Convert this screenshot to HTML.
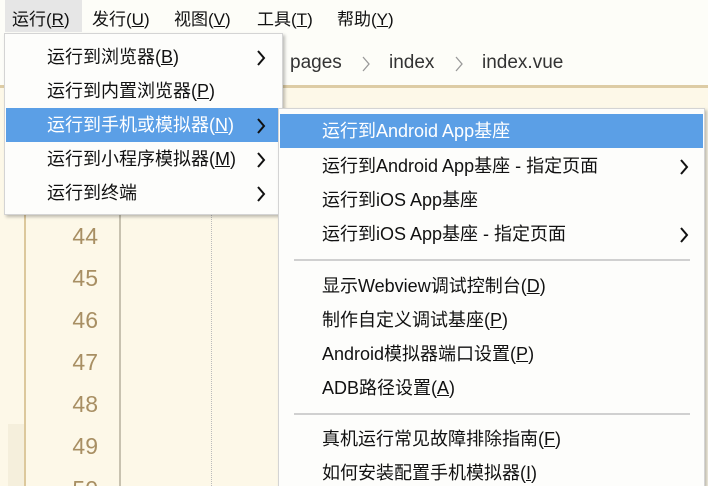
<!DOCTYPE html>
<html style="width:708px;height:486px;overflow:hidden"><head><meta charset="utf-8"><style>
*{margin:0;padding:0;box-sizing:border-box}
body{width:708px;height:486px;overflow:hidden;background:#fdf8e8;font-family:"Liberation Sans","Noto Sans CJK SC",sans-serif;position:relative;color:#111}
.a{position:absolute}
.mb{left:0;top:0;width:708px;height:33px;background:#fdfdf8}
.mb span{position:absolute;top:5px;font-size:17px}
.crumb{left:0;top:33px;width:708px;height:55px;background:#fdfdf8;border-bottom:3px solid #ddcca5}
.crumb span{position:absolute;top:19px;font-size:19px;color:#333}
.crumb svg{position:absolute;top:23px}
.ln{font-size:23px;color:#a88f63;left:64px;width:34px;text-align:right}
.menu{background:#fdfdfb;border:1px solid #d4d4d4;box-shadow:2px 2px 3px rgba(0,0,0,.25)}
.it{position:absolute;left:0;right:0;height:34px;font-size:18px;line-height:34px;white-space:nowrap}
.hl{background:#5b9fe6;color:#fff}
.arr{position:absolute;top:10px}
.sep{position:absolute;height:2px;background:#d0d0d0}
u{text-decoration:underline}
</style></head><body>
<div class="a mb">
<div class="a" style="left:5px;top:0;width:77px;height:32px;background:#e6e6e6"></div>
<span style="left:12px">运行(<u>R</u>)</span>
<span style="left:92px">发行(<u>U</u>)</span>
<span style="left:174px">视图(<u>V</u>)</span>
<span style="left:257px">工具(<u>T</u>)</span>
<span style="left:337px">帮助(<u>Y</u>)</span>
</div>
<div class="a crumb">
<span style="left:290px">pages</span>
<svg style="left:361px" width="10" height="16"><polyline points="2,1 8,8 2,15" fill="none" stroke="#999" stroke-width="1.3"/></svg>
<span style="left:389px">index</span>
<svg style="left:454px" width="10" height="16"><polyline points="2,1 8,8 2,15" fill="none" stroke="#999" stroke-width="1.3"/></svg>
<span style="left:482px">index.vue</span>
</div>
<div class="a" style="left:8px;top:424px;width:16px;height:62px;background:#f5efdc"></div>
<div class="a" style="left:24px;top:91px;width:2px;height:395px;background:#dcc89c"></div>
<div class="a" style="left:119px;top:91px;width:2px;height:395px;background:#c8c2b0"></div>
<div class="a" style="left:211px;top:91px;width:0;height:395px;border-left:1px dotted #bbb"></div>
<div class="a ln" style="top:223px">44</div>
<div class="a ln" style="top:265px">45</div>
<div class="a ln" style="top:307px">46</div>
<div class="a ln" style="top:349px">47</div>
<div class="a ln" style="top:391px">48</div>
<div class="a ln" style="top:433px">49</div>
<div class="a ln" style="top:476px">50</div>

<div class="a menu" style="left:4px;top:33px;width:279px;height:182px">
<div class="it" style="top:6px"><span style="padding-left:42px">运行到浏览器(<u>B</u>)</span><svg class="arr" style="left:251px" width="10" height="16"><polyline points="2,1 8,8 2,15" fill="none" stroke="#111" stroke-width="2"/></svg></div>
<div class="it" style="top:40px"><span style="padding-left:42px">运行到内置浏览器(<u>P</u>)</span></div>
<div class="it hl" style="top:74px;left:1px;right:1px"><span style="padding-left:41px">运行到手机或模拟器(<u>N</u>)</span><svg class="arr" style="left:250px" width="10" height="16"><polyline points="2,1 8,8 2,15" fill="none" stroke="#111" stroke-width="2"/></svg></div>
<div class="it" style="top:108px"><span style="padding-left:42px">运行到小程序模拟器(<u>M</u>)</span><svg class="arr" style="left:251px" width="10" height="16"><polyline points="2,1 8,8 2,15" fill="none" stroke="#111" stroke-width="2"/></svg></div>
<div class="it" style="top:142px"><span style="padding-left:42px">运行到终端</span><svg class="arr" style="left:251px" width="10" height="16"><polyline points="2,1 8,8 2,15" fill="none" stroke="#111" stroke-width="2"/></svg></div>
</div>

<div class="a menu" style="left:278px;top:108px;width:427px;height:378px;border-bottom:none">
<div class="it hl" style="top:5px;left:1px;right:1px;height:34px"><span style="padding-left:42px">运行到Android App基座</span></div>
<div class="it" style="top:40px"><span style="padding-left:43px">运行到Android App基座 - 指定页面</span><svg class="arr" style="left:400px" width="10" height="16"><polyline points="2,1 8,8 2,15" fill="none" stroke="#111" stroke-width="2"/></svg></div>
<div class="it" style="top:74px"><span style="padding-left:43px">运行到iOS App基座</span></div>
<div class="it" style="top:108px"><span style="padding-left:43px">运行到iOS App基座 - 指定页面</span><svg class="arr" style="left:400px" width="10" height="16"><polyline points="2,1 8,8 2,15" fill="none" stroke="#111" stroke-width="2"/></svg></div>
<div class="sep" style="top:150px;left:15px;width:396px"></div>
<div class="it" style="top:160px"><span style="padding-left:43px">显示Webview调试控制台(<u>D</u>)</span></div>
<div class="it" style="top:194px"><span style="padding-left:43px">制作自定义调试基座(<u>P</u>)</span></div>
<div class="it" style="top:228px"><span style="padding-left:43px">Android模拟器端口设置(<u>P</u>)</span></div>
<div class="it" style="top:262px"><span style="padding-left:43px">ADB路径设置(<u>A</u>)</span></div>
<div class="sep" style="top:304px;left:15px;width:396px"></div>
<div class="it" style="top:313px"><span style="padding-left:43px">真机运行常见故障排除指南(<u>F</u>)</span></div>
<div class="it" style="top:347px"><span style="padding-left:43px">如何安装配置手机模拟器(<u>I</u>)</span></div>
</div>
</body></html>
